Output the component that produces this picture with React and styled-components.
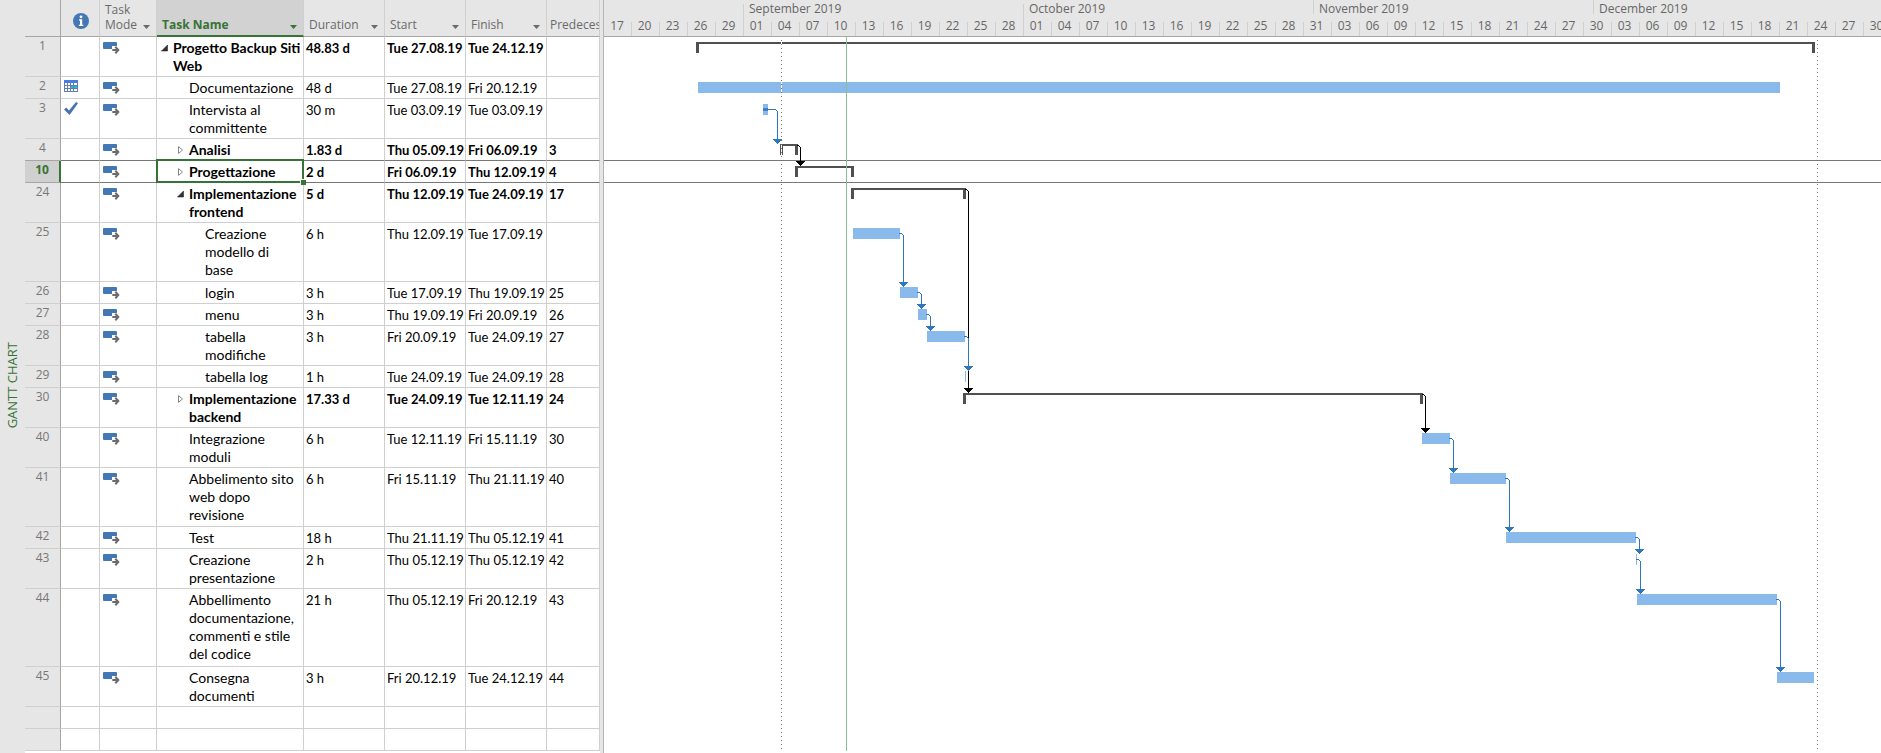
import React from "react";
import styled, { createGlobalStyle, css } from "styled-components";

const BODY_FONT = '"Lato", "Liberation Sans", sans-serif';
const UI_FONT = '"Open Sans", "Noto Sans", sans-serif';
const GREEN = "#367336";
const GRID = "#cfcfcf";
const BAR = "#8abaeb";
const LINK = "#2f77bd";
const SUMMARY = "#505050";

const GlobalStyle = createGlobalStyle`
  body { margin: 0; background: #fff; overflow: hidden; }
  *, *::before, *::after { box-sizing: border-box; }
`;

/* Row heights by number of text lines in the task name. */
const ROW_HEIGHT = { 1: 22, 2: 40, 3: 59, 4: 78 };
const HEADER_HEIGHT = 37;

/* Bars are given as [start, end] in pixels from the left edge of the chart. */
const tasks = [
  { id: 1, name: ["Progetto Backup Siti", "Web"], level: 0, open: true, duration: "48.83 d", start: "Tue 27.08.19", finish: "Tue 24.12.19", summary: [92, 1211] },
  { id: 2, name: ["Documentazione"], level: 1, flag: "calendar", duration: "48 d", start: "Tue 27.08.19", finish: "Fri 20.12.19", bar: [94, 1176] },
  { id: 3, name: ["Intervista al", "committente"], level: 1, flag: "check", duration: "30 m", start: "Tue 03.09.19", finish: "Tue 03.09.19", bar: [159, 164], done: true },
  { id: 4, name: ["Analisi"], level: 1, open: false, duration: "1.83 d", start: "Thu 05.09.19", finish: "Fri 06.09.19", pred: "3", summary: [176, 194] },
  { id: 10, name: ["Progettazione"], level: 1, open: false, selected: true, duration: "2 d", start: "Fri 06.09.19", finish: "Thu 12.09.19", pred: "4", summary: [191, 250] },
  { id: 24, name: ["Implementazione", "frontend"], level: 1, open: true, duration: "5 d", start: "Thu 12.09.19", finish: "Tue 24.09.19", pred: "17", summary: [247, 362] },
  { id: 25, name: ["Creazione", "modello di", "base"], level: 2, duration: "6 h", start: "Thu 12.09.19", finish: "Tue 17.09.19", bar: [249, 296] },
  { id: 26, name: ["login"], level: 2, duration: "3 h", start: "Tue 17.09.19", finish: "Thu 19.09.19", pred: "25", bar: [296, 314] },
  { id: 27, name: ["menu"], level: 2, duration: "3 h", start: "Thu 19.09.19", finish: "Fri 20.09.19", pred: "26", bar: [314, 323] },
  { id: 28, name: ["tabella", "modifiche"], level: 2, duration: "3 h", start: "Fri 20.09.19", finish: "Tue 24.09.19", pred: "27", bar: [323, 361] },
  { id: 29, name: ["tabella log"], level: 2, duration: "1 h", start: "Tue 24.09.19", finish: "Tue 24.09.19", pred: "28", bar: [361, 362] },
  { id: 30, name: ["Implementazione", "backend"], level: 1, open: false, duration: "17.33 d", start: "Tue 24.09.19", finish: "Tue 12.11.19", pred: "24", summary: [359, 819] },
  { id: 40, name: ["Integrazione", "moduli"], level: 1, duration: "6 h", start: "Tue 12.11.19", finish: "Fri 15.11.19", pred: "30", bar: [818, 846] },
  { id: 41, name: ["Abbelimento sito", "web dopo", "revisione"], level: 1, duration: "6 h", start: "Fri 15.11.19", finish: "Thu 21.11.19", pred: "40", bar: [846, 902] },
  { id: 42, name: ["Test"], level: 1, duration: "18 h", start: "Thu 21.11.19", finish: "Thu 05.12.19", pred: "41", bar: [902, 1032] },
  { id: 43, name: ["Creazione", "presentazione"], level: 1, duration: "2 h", start: "Thu 05.12.19", finish: "Thu 05.12.19", pred: "42", bar: [1032, 1033] },
  { id: 44, name: ["Abbellimento", "documentazione,", "commenti e stile", "del codice"], level: 1, duration: "21 h", start: "Thu 05.12.19", finish: "Fri 20.12.19", pred: "43", bar: [1033, 1173] },
  { id: 45, name: ["Consegna", "documenti"], level: 1, duration: "3 h", start: "Fri 20.12.19", finish: "Tue 24.12.19", pred: "44", bar: [1173, 1210] },
];
const emptyRows = ["a", "b"];

const links = [
  { from: 4, to: 10, x: 196, dark: true },
  { from: 24, to: 30, x: 364, dark: true },
  { from: 30, to: 40, x: 821, dark: true },
  { from: 3, to: 4, x: 173 },
  { from: 25, to: 26, x: 299 },
  { from: 26, to: 27, x: 317 },
  { from: 27, to: 28, x: 326 },
  { from: 28, to: 29, x: 364 },
  { from: 40, to: 41, x: 849 },
  { from: 41, to: 42, x: 905 },
  { from: 42, to: 43, x: 1035 },
  { from: 43, to: 44, x: 1036 },
  { from: 44, to: 45, x: 1176 },
];

const months = [
  { label: "", width: 139, days: ["17", "20", "23", "26", "29"] },
  { label: "September 2019", width: 280, tall: true, days: ["01", "04", "07", "10", "13", "16", "19", "22", "25", "28"] },
  { label: "October 2019", width: 290, tall: true, days: ["01", "04", "07", "10", "13", "16", "19", "22", "25", "28", "31"] },
  { label: "November 2019", width: 280, days: ["03", "06", "09", "12", "15", "18", "21", "24", "27", "30"] },
  { label: "December 2019", width: 289, days: ["03", "06", "09", "12", "15", "18", "21", "24", "27", "30"] },
];

/* ---------- page ---------- */

const Page = styled.main`
  display: flex;
  min-height: 100vh;
  background: #fff;
  font-family: ${BODY_FONT};
`;

const ViewLabel = styled.aside`
  flex: none;
  width: 25px;
  display: flex;
  align-items: center;
  justify-content: center;
  padding: 18px 2px 0 0;
  background: #e6e6e6;
  color: ${GREEN};
  font: 500 13px/18px ${UI_FONT};

  span {
    writing-mode: vertical-rl;
    transform: rotate(180deg);
    white-space: nowrap;
  }
`;

const Splitter = styled.div`
  flex: none;
  width: 4px;
  background: #e6e6e6;
  border-right: 1px solid #b5b5b5;
`;

/* ---------- task sheet ---------- */

const Sheet = styled.table`
  flex: none;
  align-self: flex-start;
  width: 575px;
  table-layout: fixed;
  border-collapse: separate;
  border-spacing: 0;
`;

const HeadCell = styled.th`
  height: ${HEADER_HEIGHT}px;
  padding: 0 4px 4px 5px;
  overflow: hidden;
  vertical-align: bottom;
  text-align: left;
  font: 12px/15px ${UI_FONT};
  color: #6a6a6a;
  background: #e6e6e6;
  border-right: 1px solid ${GRID};
  border-bottom: 1px solid #a6a6a6;
  ${(p) => p.$edge && css`border-right-color: #a6a6a6;`}
  ${(p) => p.$last && css`padding: 0 0 4px 3px;`}
  ${(p) => p.$active && css`
    color: ${GREEN};
    font-weight: 700;
    background: #d2d2d2;
    border-bottom: 2px solid ${GREEN};
    padding-bottom: 3px;
  `}
`;

const HeadInner = styled.div`
  display: flex;
  align-items: flex-end;
  justify-content: ${(p) => (p.$center ? "center" : "space-between")};
  padding-bottom: ${(p) => (p.$center ? 3 : 0)}px;
  white-space: nowrap;
`;

const FilterButton = styled.button`
  display: flex;
  padding: 3px 2px;
  border: 0;
  background: none;
  color: inherit;
`;

const Cell = styled.td`
  height: ${(p) => p.$height}px;
  padding: 2px 0 0 2px;
  vertical-align: top;
  overflow: hidden;
  white-space: nowrap;
  font-size: 13px;
  line-height: 18px;
  font-weight: ${(p) => (p.$bold ? 700 : 400)};
  color: #000;
  border-right: 1px solid ${GRID};
  border-bottom: 1px solid ${(p) => (p.$strong ? "#777" : GRID)};
`;

const RowNumber = styled.th`
  padding: 0;
  vertical-align: top;
  text-align: center;
  font: 12px/18px ${UI_FONT};
  color: #777;
  background: #e6e6e6;
  border-right: 1px solid #a6a6a6;
  border-bottom: 1px solid ${(p) => (p.$strong ? "#a6a6a6" : GRID)};
  ${(p) => p.$selected && css`
    color: ${GREEN};
    font-weight: 700;
    background: #d0d0d0;
    border-right: 2px solid ${GREEN};
  `}
`;

const IconCell = styled(Cell)`
  padding: ${(p) => (p.$mode ? "5px 0 0 3px" : "3px 0 0 3px")};
  line-height: 0;
`;

const NameCell = styled(Cell)`
  padding-left: ${(p) => p.$level * 16}px;
  font-size: 14px;
  ${(p) => p.$selected && css`
    position: relative;
    overflow: visible;
    &::before {
      content: "";
      position: absolute;
      inset: -2px -1px -1px -1px;
      border: 2px solid ${GREEN};
    }
    &::after {
      content: "";
      position: absolute;
      right: -3px;
      bottom: -3px;
      width: 6px;
      height: 6px;
      background: ${GREEN};
      border: solid #fff;
      border-width: 1px 0 0 1px;
    }
  `}
`;

const NameInner = styled.div`
  display: flex;
  align-items: flex-start;
`;

const ToggleSlot = styled.span`
  flex: none;
  display: flex;
  width: 16px;
  height: 18px;
`;

const Toggle = styled.button`
  display: flex;
  align-items: center;
  width: 16px;
  padding: 0 0 0 4px;
  border: 0;
  background: none;
`;

const NameLines = styled.span`
  white-space: pre;
`;

/* ---------- chart ---------- */

const Chart = styled.section`
  flex: 1;
  min-width: 0;
  overflow: hidden;
`;

const Timescale = styled.header`
  display: flex;
  flex-direction: column;
  height: ${HEADER_HEIGHT}px;
  background: #e6e6e6;
  border-bottom: 1px solid #a6a6a6;
  color: #666;
  font: 12px/18px ${UI_FONT};
  white-space: nowrap;
`;

const TimescaleRow = styled.div`
  display: flex;
  height: 18px;
`;

const Month = styled.div`
  flex: none;
  width: ${(p) => p.$width}px;
  padding-left: 6px;
  background: linear-gradient(${GRID}, ${GRID}) no-repeat left
    ${(p) => (p.$tall ? "bottom / 1px 14px" : "top / 1px 14px")};
  &:first-child { background: none; }
`;

const Day = styled.div`
  flex: none;
  width: 28px;
  text-align: center;
  line-height: 15px;
  border-right: 1px solid transparent;
  background: linear-gradient(${GRID}, ${GRID}) no-repeat left bottom / 1px ${(p) => (p.$tall ? 18 : 14)}px;
  &:first-child { width: 27px; background: none; }
`;

const Plot = styled.svg`
  display: block;
  width: 100%;
`;

/* ---------- icons ---------- */

const InfoIcon = () => (
  <svg width="16" height="16" viewBox="0 0 16 16" role="img" aria-label="Indicators">
    <circle cx="8" cy="8" r="8" fill="#4478b5" />
    <circle cx="8" cy="3.8" r="1.4" fill="#fff" />
    <path d="M6 6.3h3.2v5.5h1.1V13H5.8v-1.2H7V7.5H6z" fill="#fff" />
  </svg>
);

const CaretIcon = () => (
  <svg width="7" height="4" viewBox="0 0 7 4" aria-hidden="true">
    <path d="M0 0h7L3.500 4z" fill="currentColor" />
  </svg>
);

const AutoModeIcon = () => (
  <svg width="17" height="12" viewBox="0 0 17 12" role="img" aria-label="Auto scheduled">
    <path d="M1 0h12a1 1 0 0 1 1 1v3H9v3H1a1 1 0 0 1-1-1V1a1 1 0 0 1 1-1z" fill="#4478b5" />
    <path d="M9.500 8h5.500M12.300 5l3 3-3 3" fill="none" stroke="#fff" strokeWidth="3.500" />
    <path d="M9.300 8h6M12.300 4.800l3 3.200-3 3.200" fill="none" stroke="#6b6b6b" strokeWidth="2" />
  </svg>
);

const CalendarIcon = () => (
  <svg width="14" height="12" viewBox="0 0 14 12" role="img" aria-label="Constraint" shapeRendering="crispEdges">
    <rect width="14" height="12" fill="#5f7dad" />
    <rect width="14" height="3" fill="#4a7be0" />
    {[3, 6, 9].map((y) =>
      [1, 4, 7, 10].map((x) => (
        <rect key={`${x}-${y}`} x={x} y={y} width={x === 10 ? 3 : 2} height={2} fill={x > 6 && y === 6 ? "#27b8e0" : "#fff"} />
      ))
    )}
  </svg>
);

const CheckIcon = () => (
  <svg width="14" height="13" viewBox="0 0 14 13" role="img" aria-label="Completed">
    <path d="M0 7.500 2.300 5.400 5 8.600 12 0 14 1.300 5.600 13z" fill="#4a73ad" />
  </svg>
);

const ToggleIcon = ({ open }) => (
  <svg width="7" height="8" viewBox="0 0 7 8" aria-hidden="true">
    {open ? <path d="M6.500 1v6H.5z" fill="#333" stroke="#111" strokeWidth="0.500" /> : <path d="M1.500.6v6.800L5.500 4z" fill="#fff" stroke="#888" />}
  </svg>
);

/* ---------- plot ---------- */

const layout = {};
let sheetHeight = 0;
tasks.forEach((t) => {
  layout[t.id] = { top: sheetHeight, height: ROW_HEIGHT[t.name.length], task: t };
  sheetHeight += ROW_HEIGHT[t.name.length];
});
sheetHeight += emptyRows.length * ROW_HEIGHT[1];

function SummaryBar({ top, span: [a, b] }) {
  return (
    <path d={`M${a} ${top + 16}v-11H${b}v11h-3v-9H${a + 3}v9z`} fill={SUMMARY} />
  );
}

function TaskBar({ top, span: [a, b], done }) {
  return (
    <g>
      <rect x={a} y={top + 5} width={b - a} height={11} fill={BAR} />
      {done && <rect x={a} y={top + 9} width={b - a} height={3} fill="#3f80c8" />}
    </g>
  );
}

function Link({ from, to, x, dark }) {
  const source = layout[from];
  const y = source.top + (source.task.summary ? 6 : 10);
  const startX = (source.task.summary || source.task.bar)[1] - 1;
  const end = layout[to].top;
  const color = dark ? "#000" : LINK;
  const arrow = Array.from({ length: 5 }, (_, i) => (
    <rect key={i} x={x - 4 + i} y={end + i} width={9 - 2 * i} height={1} fill={color} />
  ));
  return (
    <g>
      <path d={`M${startX} ${y}H${x - 2}v1h1v1h1V${end}h1V${y + 2}h-1v-1h-1v-1h-1z`} fill={color} />
      <rect x={startX} y={y} width={x - 1 - startX} height={1} fill={color} />
      {arrow}
    </g>
  );
}

function GanttPlot() {
  const selected = layout[10];
  return (
    <Plot height={sheetHeight} shapeRendering="crispEdges" role="img" aria-label="Gantt chart">
      <rect x="0" y={selected.top - 1} width="100%" height="1" fill="#777" />
      <rect x="0" y={selected.top + selected.height - 1} width="100%" height="1" fill="#777" />
      {Object.values(layout).map(({ top, task }) =>
        task.summary ? (
          <SummaryBar key={task.id} top={top} span={task.summary} />
        ) : (
          <TaskBar key={task.id} top={top} span={task.bar} done={task.done} />
        )
      )}
      {links.map((l) => (
        <Link key={`${l.from}-${l.to}`} {...l} />
      ))}
      <rect x="177" y="5" width="1" height="2" fill="#fff" />
      <rect x="177" y="45" width="1" height="11" fill="#fff" />
      <rect x="177" y="107" width="1" height="11" fill="#fff" />
      <path d={`M177.500 3V${sheetHeight}M1213.500 3V${sheetHeight}`} stroke="#777" strokeDasharray="1 3" />
      <rect x="242" y="0" width="1" height={sheetHeight} fill="#8fbd93" />
    </Plot>
  );
}

/* ---------- sheet ---------- */

function ColumnHead({ children, label, active }) {
  return (
    <HeadCell scope="col" $active={active}>
      <HeadInner>
        <span>{children}</span>
        <FilterButton aria-label={`Filter ${label}`}>
          <CaretIcon />
        </FilterButton>
      </HeadInner>
    </HeadCell>
  );
}

function TaskRow({ task, strong }) {
  const height = ROW_HEIGHT[task.name.length];
  const bold = Boolean(task.summary);
  const common = { $height: height, $strong: strong };
  return (
    <tr>
      <RowNumber scope="row" $selected={task.selected} $strong={strong}>{task.id}</RowNumber>
      <IconCell {...common}>
        {task.flag === "calendar" && <CalendarIcon />}
        {task.flag === "check" && <CheckIcon />}
      </IconCell>
      <IconCell {...common} $mode><AutoModeIcon /></IconCell>
      <NameCell {...common} $bold={bold} $level={task.level} $selected={task.selected}>
        <NameInner>
          <ToggleSlot>
            {task.open !== undefined && (
              <Toggle aria-label={task.open ? "Collapse" : "Expand"} aria-expanded={task.open}>
                <ToggleIcon open={task.open} />
              </Toggle>
            )}
          </ToggleSlot>
          <NameLines>{task.name.join("\n")}</NameLines>
        </NameInner>
      </NameCell>
      <Cell {...common} $bold={bold}>{task.duration}</Cell>
      <Cell {...common} $bold={bold}>{task.start}</Cell>
      <Cell {...common} $bold={bold}>{task.finish}</Cell>
      <Cell {...common} $bold={bold}>{task.pred}</Cell>
    </tr>
  );
}

function TaskSheet() {
  return (
    <Sheet>
      <colgroup>
        {[36, 39, 57, 147, 81, 81, 81, 53].map((w, i) => (
          <col key={i} width={w} />
        ))}
      </colgroup>
      <thead>
        <tr>
          <HeadCell $edge />
          <HeadCell scope="col">
            <HeadInner $center><InfoIcon /></HeadInner>
          </HeadCell>
          <ColumnHead label="Task Mode">Task<br />Mode</ColumnHead>
          <ColumnHead label="Task Name" active>Task Name</ColumnHead>
          <ColumnHead label="Duration">Duration</ColumnHead>
          <ColumnHead label="Start">Start</ColumnHead>
          <ColumnHead label="Finish">Finish</ColumnHead>
          <HeadCell scope="col" $last>Predeces</HeadCell>
        </tr>
      </thead>
      <tbody>
        {tasks.map((t, i) => (
          <TaskRow key={t.id} task={t} strong={t.selected || tasks[i + 1]?.selected} />
        ))}
        {emptyRows.map((key) => (
          <tr key={key}>
            <RowNumber />
            {Array.from({ length: 7 }, (_, i) => <Cell key={i} $height={22} />)}
          </tr>
        ))}
      </tbody>
    </Sheet>
  );
}

export default function App() {
  return (
    <Page>
      <GlobalStyle />
      <ViewLabel><span>GANTT CHART</span></ViewLabel>
      <TaskSheet />
      <Splitter />
      <Chart>
        <Timescale>
          <TimescaleRow>
            {months.map((m) => (
              <Month key={m.label} $width={m.width} $tall={m.tall}>{m.label}</Month>
            ))}
          </TimescaleRow>
          <TimescaleRow>
            {months.flatMap((m) => m.days.map((d, i) => ({ d, tall: m.tall && i === 0 }))).map(({ d, tall }, i) => (
              <Day key={i} $tall={tall}>{d}</Day>
            ))}
          </TimescaleRow>
        </Timescale>
        <GanttPlot />
      </Chart>
    </Page>
  );
}
